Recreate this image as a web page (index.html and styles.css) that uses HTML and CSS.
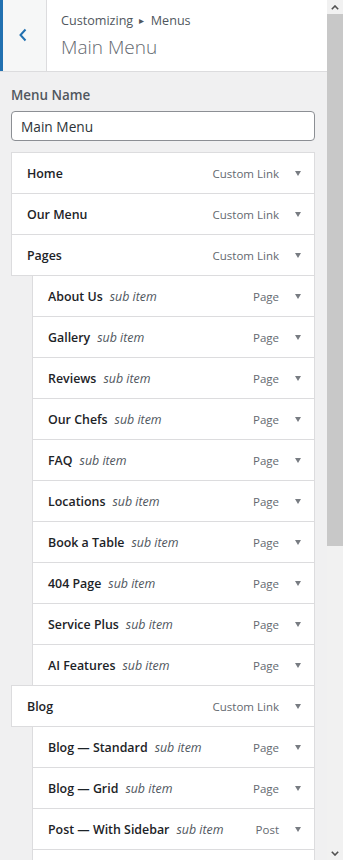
FILE: index.html
```html
<!DOCTYPE html>
<html>
<head>
    <title>Customizing Menus</title>
    <link rel="stylesheet" href="styles.css">
</head>
<body>
    <div class="frame">
        <div class="panel">
            <div class="panel-header">
                <button class="back-btn" aria-label="Back">
                    <svg width="10" height="14" viewBox="0 0 10 14"><polyline points="7.5,1.5 2.5,7 7.5,12.5" fill="none" stroke="#2271b1" stroke-width="2"/></svg>
                </button>
                <div class="panel-title">
                    <span class="crumbs">Customizing <span class="crumb-sep">&#9656;</span> Menus</span>
                    <h2>Main Menu</h2>
                </div>
            </div>

            <div class="panel-body">
                <label class="field-label">Menu Name</label>
                <input class="menu-name" type="text" value="Main Menu">

                <ul class="menu-items">
                    <li class="item"><span class="title">Home</span><span class="type">Custom Link</span><span class="toggle"></span></li>
                    <li class="item"><span class="title">Our Menu</span><span class="type">Custom Link</span><span class="toggle"></span></li>
                    <li class="item"><span class="title">Pages</span><span class="type">Custom Link</span><span class="toggle"></span></li>
                    <li class="item sub"><span class="title">About Us</span><em>sub item</em><span class="type">Page</span><span class="toggle"></span></li>
                    <li class="item sub"><span class="title">Gallery</span><em>sub item</em><span class="type">Page</span><span class="toggle"></span></li>
                    <li class="item sub"><span class="title">Reviews</span><em>sub item</em><span class="type">Page</span><span class="toggle"></span></li>
                    <li class="item sub"><span class="title">Our Chefs</span><em>sub item</em><span class="type">Page</span><span class="toggle"></span></li>
                    <li class="item sub"><span class="title">FAQ</span><em>sub item</em><span class="type">Page</span><span class="toggle"></span></li>
                    <li class="item sub"><span class="title">Locations</span><em>sub item</em><span class="type">Page</span><span class="toggle"></span></li>
                    <li class="item sub"><span class="title">Book a Table</span><em>sub item</em><span class="type">Page</span><span class="toggle"></span></li>
                    <li class="item sub"><span class="title">404 Page</span><em>sub item</em><span class="type">Page</span><span class="toggle"></span></li>
                    <li class="item sub"><span class="title">Service Plus</span><em>sub item</em><span class="type">Page</span><span class="toggle"></span></li>
                    <li class="item sub"><span class="title">AI Features</span><em>sub item</em><span class="type">Page</span><span class="toggle"></span></li>
                    <li class="item"><span class="title">Blog</span><span class="type">Custom Link</span><span class="toggle"></span></li>
                    <li class="item sub"><span class="title">Blog — Standard</span><em>sub item</em><span class="type">Page</span><span class="toggle"></span></li>
                    <li class="item sub"><span class="title">Blog — Grid</span><em>sub item</em><span class="type">Page</span><span class="toggle"></span></li>
                    <li class="item sub"><span class="title">Post — With Sidebar</span><em>sub item</em><span class="type">Post</span><span class="toggle"></span></li>
                    <li class="item sub"></li>
                </ul>
            </div>
        </div>

        <div class="scrollbar">
            <div class="sb-btn">
                <svg width="8" height="5" viewBox="0 0 8 5"><polyline points="0.8,4.2 4,1 7.2,4.2" fill="none" stroke="#505050" stroke-width="1.6"/></svg>
            </div>
            <div class="sb-track">
                <div class="sb-thumb"></div>
            </div>
            <div class="sb-btn">
                <svg width="8" height="5" viewBox="0 0 8 5"><polyline points="0.8,0.8 4,4 7.2,0.8" fill="none" stroke="#505050" stroke-width="1.6"/></svg>
            </div>
        </div>
    </div>
</body>
</html>
```

FILE: styles.css
```css
* {
    box-sizing: border-box;
}

body {
    margin: 0;
    font-family: 'Open Sans', 'Noto Sans', sans-serif;
    color: #1d2327;
    background: #f0f0f1;
}

.frame {
    display: flex;
    height: 860px;
    overflow: hidden;
}

.panel {
    flex: 1;
    min-width: 0;
    background: #f0f0f1;
}

/* header */
.panel-header {
    display: flex;
    height: 72px;
    background: #fff;
    border-bottom: 1px solid #dcdcde;
}

.back-btn {
    width: 47px;
    padding: 0 3px 1px 0;
    border: none;
    border-left: 3px solid #2271b1;
    border-right: 1px solid #dcdcde;
    background: #f6f7f7;
    display: flex;
    align-items: center;
    justify-content: center;
}

.panel-title {
    padding: 11px 14px 0;
    display: flex;
    flex-direction: column;
}

.crumbs {
    font-size: 12.6px;
    line-height: 20px;
    color: #50575e;
}

.crumb-sep {
    font-size: 10px;
    position: relative;
    top: -1px;
    margin: 0 3px;
}

.panel-title h2 {
    margin: 2px 0 0;
    font-size: 19px;
    font-weight: 300;
    line-height: 28px;
    color: #646970;
}

/* body */
.panel-body {
    padding: 13px 12px 0 11px;
}

.field-label {
    display: block;
    font-size: 13.4px;
    font-weight: 600;
    line-height: 20px;
    color: #50575e;
    margin-bottom: 6px;
}

.menu-name {
    display: block;
    width: 100%;
    height: 30px;
    padding: 0 9px;
    border: 1px solid #8c8f94;
    border-radius: 4px;
    font-family: inherit;
    font-size: 13.7px;
    color: #2c3338;
    background: #fff;
}

.menu-items {
    list-style: none;
    margin: 11px 0 0;
    padding: 0;
}

.item {
    display: flex;
    align-items: center;
    height: 42px;
    margin-top: -1px;
    padding: 2px 13px 0 15px;
    background: #fff;
    border: 1px solid #dcdcde;
    font-size: 12.4px;
    line-height: 20px;
}

.item:first-child {
    margin-top: 0;
}

.item.sub {
    margin-left: 21px;
}

.item .title {
    font-weight: 600;
    color: #1d2327;
    white-space: nowrap;
}

.item em {
    margin-left: 7px;
    color: #50575e;
    white-space: nowrap;
}

.item .type {
    margin-left: auto;
    font-size: 11.5px;
    color: #646970;
    white-space: nowrap;
}

.toggle {
    width: 0;
    height: 0;
    margin: 0 0 1px 16px;
    border-left: 3.5px solid transparent;
    border-right: 3.5px solid transparent;
    border-top: 5px solid #787c82;
}

/* fake window scrollbar */
.scrollbar {
    width: 16px;
    display: flex;
    flex-direction: column;
    background: #f1f1f1;
}

.sb-btn {
    height: 14px;
    display: flex;
    align-items: center;
    justify-content: center;
}

.sb-track {
    flex: 1;
}

.sb-thumb {
    height: 532px;
    background: #c8c8c8;
}
```
